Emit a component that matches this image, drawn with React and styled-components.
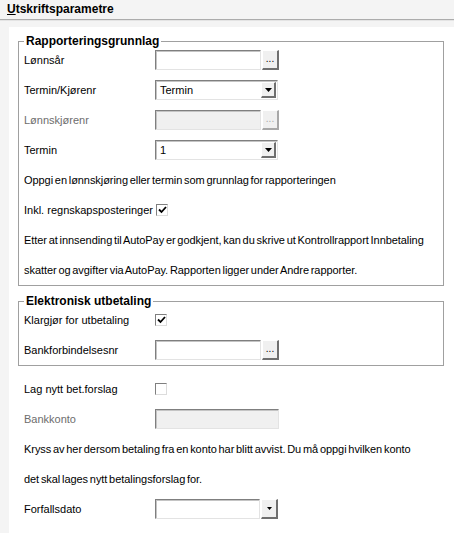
import React from "react";
import styled, { createGlobalStyle } from "styled-components";

const GlobalStyle = createGlobalStyle`
  html, body {
    margin: 0;
    padding: 0;
    background: #f4f4f4;
    font-family: "Liberation Sans", Arial, sans-serif;
    font-size: 11px;
    color: #000;
  }
`;

const Page = styled.div`
  width: 454px;
  height: 533px;
  overflow: hidden;
  background: #f4f4f4;
`;

const Header = styled.div`
  height: 27px;
`;

const Title = styled.div`
  padding: 2px 7px 0;
  font-size: 12px;
  font-weight: bold;
  line-height: 14px;
  height: 17px;
  u {
    text-decoration: underline;
  }
`;

const Rule = styled.div`
  border-top: 1px solid #acacac;
  border-bottom: 1px solid #e4e4e4;
`;

const Panel = styled.div`
  margin-left: 9px;
  background: #fff;
  padding-top: 7px;
  height: 506px;
  box-sizing: border-box;
`;

const Group = styled.fieldset`
  margin: ${(p) => p.$top || 0}px 10px 0 9px;
  padding: 0 5px 4px;
  border: 1px solid #a0a0a0;
  display: grid;
  row-gap: 8px;
`;

const Legend = styled.legend`
  font-size: 12px;
  font-weight: bold;
  line-height: 15px;
  padding: 0 2px;
`;

const Loose = styled.div`
  display: grid;
  row-gap: 8px;
  padding: 12px 0 0 15px;
`;

const Row = styled.div`
  display: grid;
  grid-template-columns: 131px auto;
  justify-content: start;
  align-items: center;
  height: 22px;
`;

const Label = styled.span`
  color: ${(p) => (p.$disabled ? "#6d6d6d" : "#000")};
  white-space: nowrap;
`;

const Note = styled.div`
  height: 22px;
  line-height: 22px;
  white-space: nowrap;
  display: flex;
  align-items: center;
  word-spacing: ${(p) => (p.$tight ? "-1.2px" : "0")};
  letter-spacing: ${(p) => (p.$tight ? "-0.06px" : "0")};
`;

const Field = styled.div`
  display: flex;
  align-items: stretch;
  gap: 1px;
  height: 20px;
`;

const TextBox = styled.div`
  width: ${(p) => p.$w || 106}px;
  height: 20px;
  box-sizing: border-box;
  border: 1px solid;
  border-color: #7f7f7f #e3e3e3 #e3e3e3 #7f7f7f;
  box-shadow: inset 1px 1px 0 #c4c4c4;
  background: ${(p) => (p.$disabled ? "#f0f0f0" : "#fff")};
  padding: 0 4px;
  display: flex;
  align-items: center;
`;

const Dots = styled.div`
  width: 17px;
  height: 20px;
  box-sizing: border-box;
  background: #f0f0f0;
  border-style: solid;
  border-width: 1px 2px 2px 1px;
  border-color: ${(p) =>
    p.$disabled ? "#fff #a8a8a8 #a8a8a8 #fff" : "#fff #6f6f6f #6f6f6f #fff"};
  color: ${(p) => (p.$disabled ? "#a8a8a8" : "#000")};
  font-size: 10px;
  line-height: 12px;
  display: flex;
  align-items: flex-end;
  justify-content: center;
  padding-bottom: 3px;
`;

const Select = styled.div`
  width: 123px;
  height: 20px;
  box-sizing: border-box;
  border: 1px solid;
  border-color: #7f7f7f #e3e3e3 #e3e3e3 #7f7f7f;
  box-shadow: inset 1px 1px 0 #c4c4c4;
  background: #fff;
  display: flex;
  align-items: center;
  justify-content: space-between;
  padding: 1px 1px 1px 4px;
`;

const DropButton = styled.div`
  width: ${(p) => p.$w || 15}px;
  height: ${(p) => p.$h || 16}px;
  box-sizing: border-box;
  background: #f0f0f0;
  border-style: solid;
  border-width: 1px 2px 2px 1px;
  border-color: #fff #6f6f6f #6f6f6f #fff;
  display: flex;
  align-items: center;
  justify-content: center;
`;

const Box = styled.span`
  display: inline-flex;
  align-items: center;
  justify-content: center;
  width: 12px;
  height: 12px;
  box-sizing: border-box;
  margin-left: ${(p) => p.$ml || 0}px;
  border: 1px solid;
  border-color: #7f7f7f #dcdcdc #dcdcdc #7f7f7f;
  background: #fff;
`;

const Arrow = ({ size = 7 }) => (
  <svg width={size} height={Math.ceil(size / 2)} viewBox={`0 0 ${size} ${Math.ceil(size / 2)}`}>
    <polygon points={`0,0 ${size},0 ${size / 2},${Math.ceil(size / 2)}`} fill="#000" />
  </svg>
);

const Check = ({ checked, ml }) => (
  <Box $ml={ml}>
    {checked && (
      <svg width="9" height="8" viewBox="0 0 9 8">
        <path d="M1 3.5 L3.5 6 L8 1" stroke="#000" strokeWidth="1.8" fill="none" />
      </svg>
    )}
  </Box>
);

const Lookup = ({ disabled }) => (
  <Field>
    <TextBox $disabled={disabled} />
    <Dots $disabled={disabled}>...</Dots>
  </Field>
);

const Dropdown = ({ value }) => (
  <Select>
    <span>{value}</span>
    <DropButton>
      <Arrow />
    </DropButton>
  </Select>
);

export default function App() {
  return (
    <Page>
      <GlobalStyle />
      <Header>
        <Title>
          <u>U</u>tskriftsparametre
        </Title>
        <Rule />
      </Header>
      <Panel>
        <Group>
          <Legend>Rapporteringsgrunnlag</Legend>
          <Row>
            <Label>Lønnsår</Label>
            <Lookup />
          </Row>
          <Row>
            <Label>Termin/Kjørenr</Label>
            <Dropdown value="Termin" />
          </Row>
          <Row>
            <Label $disabled>Lønnskjørenr</Label>
            <Lookup disabled />
          </Row>
          <Row>
            <Label>Termin</Label>
            <Dropdown value="1" />
          </Row>
          <Note $tight>Oppgi en lønnskjøring eller termin som grunnlag for rapporteringen</Note>
          <Note>
            Inkl. regnskapsposteringer
            <Check checked ml={3} />
          </Note>
          <Note $tight>Etter at innsending til AutoPay er godkjent, kan du skrive ut Kontrollrapport Innbetaling</Note>
          <Note $tight>skatter og avgifter via AutoPay. Rapporten ligger under Andre rapporter.</Note>
        </Group>

        <Group $top={8}>
          <Legend>Elektronisk utbetaling</Legend>
          <Row>
            <Label>Klargjør for utbetaling</Label>
            <Check checked />
          </Row>
          <Row>
            <Label>Bankforbindelsesnr</Label>
            <Lookup />
          </Row>
        </Group>

        <Loose>
          <Row>
            <Label>Lag nytt bet.forslag</Label>
            <Check />
          </Row>
          <Row>
            <Label $disabled>Bankkonto</Label>
            <TextBox $disabled $w={124} />
          </Row>
          <Note $tight>Kryss av her dersom betaling fra en konto har blitt avvist. Du må oppgi hvilken konto</Note>
          <Note $tight>det skal lages nytt betalingsforslag for.</Note>
          <Row>
            <Label>Forfallsdato</Label>
            <Field>
              <TextBox $w={105} />
              <DropButton $w={17} $h={20}>
                <Arrow size={5} />
              </DropButton>
            </Field>
          </Row>
        </Loose>
      </Panel>
    </Page>
  );
}
